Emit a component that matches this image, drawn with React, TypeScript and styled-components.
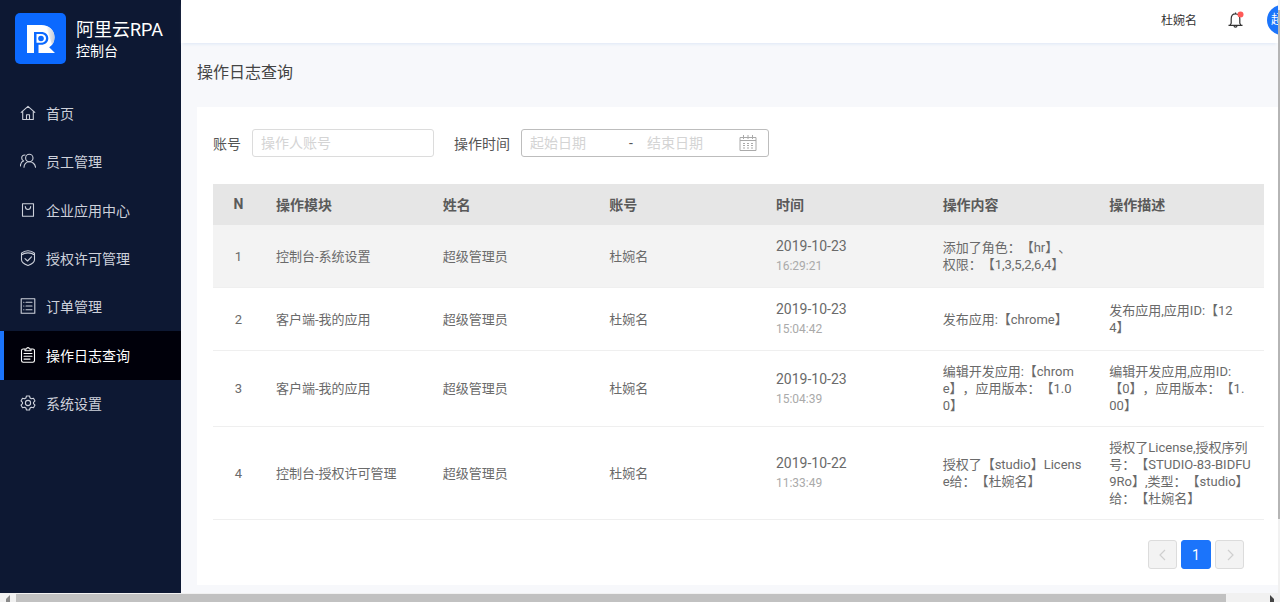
import React from 'react';
import styled, { createGlobalStyle } from 'styled-components';

const GlobalStyle = createGlobalStyle`
  *, *::before, *::after { box-sizing: border-box; }
  body {
    margin: 0;
    font-family: Roboto, 'Noto Sans CJK SC', sans-serif;
    font-size: 14px;
    color: #555;
    background: #f7f8fb;
    text-spacing-trim: space-all;
  }
  button, input { font: inherit; }
`;

const Page = styled.div`
  min-height: 100vh;
  display: flex;
  flex-direction: column;
`;

const Columns = styled.div`
  flex: 1;
  display: flex;
`;

const Sidebar = styled.aside`
  flex: 0 0 181px;
  background: #0d1833;
`;

const Brand = styled.div`
  display: flex;
  align-items: center;
  gap: 10px;
  padding: 13px 0 0 15px;
  color: #fff;
`;

const BrandText = styled.div`
  display: flex;
  flex-direction: column;
  padding-top: 2px;
`;

const BrandName = styled.span`
  font-size: 18px;
  line-height: 22px;
`;

const BrandSub = styled.span`
  line-height: 20px;
`;

const Nav = styled.nav`
  display: flex;
  flex-direction: column;
  height: 364px;
  padding-top: 25px;
`;

const NavItem = styled.a<{ $active?: boolean }>`
  flex: 1;
  display: flex;
  align-items: center;
  gap: 10px;
  padding: 0 0 1px 16px;
  border-left: 4px solid ${(p) => (p.$active ? '#1b74fb' : 'transparent')};
  background: ${(p) => (p.$active ? '#00000a' : 'transparent')};
  color: ${(p) => (p.$active ? '#fff' : '#cdd1db')};
  text-decoration: none;
`;

const NavIcon = styled.svg`
  width: 16px;
  height: 16px;
  fill: none;
  stroke: currentColor;
  stroke-width: 1.1;
  stroke-linecap: round;
  stroke-linejoin: round;
`;

const Main = styled.main`
  flex: 1;
  min-width: 0;
`;

const TopBar = styled.header`
  display: flex;
  align-items: center;
  justify-content: flex-end;
  height: 43px;
  padding-bottom: 4px;
  background: #fff;
  box-shadow: 0 3px 3px -2px #dde7f6;
`;

const UserName = styled.span`
  font-size: 12px;
  margin-right: 30px;
  color: #333;
`;

const BellButton = styled.button`
  display: flex;
  padding: 0;
  margin-right: 22px;
  border: 0;
  background: none;
  color: #333;
`;

const AvatarClip = styled.div`
  width: 11px;
  overflow: hidden;
`;

const Avatar = styled.div`
  width: 30px;
  height: 30px;
  padding-left: 4px;
  border-radius: 50%;
  background: #1b74fb;
  color: #fff;
  font-size: 12px;
  line-height: 30px;
  white-space: nowrap;
`;

const Title = styled.h1`
  margin: 0;
  padding: 18px 16px 22px;
  font-size: 16px;
  line-height: 24px;
  font-weight: 400;
  color: #444;
`;

const Card = styled.section`
  margin: 0 0 8px 16px;
  padding: 22px 14px 16px 16px;
  background: #fff;
`;

const Filters = styled.form`
  display: flex;
  align-items: center;
  gap: 20px;
  margin-bottom: 27px;
`;

const Field = styled.div`
  display: flex;
  align-items: center;
  gap: 11px;
`;

const PlainInput = styled.input`
  min-width: 0;
  padding: 0;
  border: 0;
  outline: 0;
  background: none;
  color: #555;
  &::placeholder { color: #d4d4d4; opacity: 1; }
`;

const BoxedInput = styled(PlainInput)`
  width: 182px;
  height: 28px;
  padding: 0 8px;
  border: 1px solid #dcdcdc;
  border-radius: 3px;
`;

const RangeBox = styled.div`
  display: flex;
  align-items: center;
  width: 248px;
  height: 28px;
  padding: 0 11px 0 8px;
  border: 1px solid #bdbdbd;
  border-radius: 3px;
`;

const StartInput = styled(PlainInput)`
  width: 99px;
`;

const EndInput = styled(PlainInput)`
  flex: 1;
`;

const Dash = styled.span`
  width: 18px;
`;

const Table = styled.table`
  width: 100%;
  table-layout: fixed;
  border-collapse: collapse;
`;

const HeadCell = styled.th<{ $narrow?: boolean }>`
  width: ${(p) => (p.$narrow ? '51px' : 'auto')};
  height: 41px;
  padding: 0 ${(p) => (p.$narrow ? '0' : '12px')} 2px;
  background: #e6e6e6;
  text-align: ${(p) => (p.$narrow ? 'center' : 'left')};
  font-weight: 700;
  color: #5a5a5a;
`;

const Row = styled.tr<{ $hover?: boolean }>`
  background: ${(p) => (p.$hover ? '#f3f3f3' : 'transparent')};
  border-bottom: 1px solid #efefef;
`;

const Cell = styled.td<{ $center?: boolean }>`
  padding: 12px ${(p) => (p.$center ? '0' : '12px')};
  text-align: ${(p) => (p.$center ? 'center' : 'left')};
  font-size: 13px;
  line-height: 17px;
  color: #6a6a6a;
  white-space: pre;
`;

const DateCell = styled(Cell)`
  padding: 11px 12px;
`;

const DateText = styled.div`
  font-size: 14px;
  line-height: 20px;
`;

const TimeText = styled.div`
  font-size: 12px;
  line-height: 20px;
  color: #aaa;
`;

const Pager = styled.nav`
  display: flex;
  justify-content: flex-end;
  gap: 4px;
  padding: 20px 20px 0 0;
`;

const PageButton = styled.button<{ $current?: boolean }>`
  display: flex;
  align-items: center;
  justify-content: center;
  width: ${(p) => (p.$current ? '30px' : '29px')};
  height: 29px;
  padding: 0;
  border: 1px solid ${(p) => (p.$current ? '#1b74fb' : '#dcdcdc')};
  border-radius: 3px;
  background: ${(p) => (p.$current ? '#1b74fb' : '#f3f3f3')};
  color: ${(p) => (p.$current ? '#fff' : '#cfcfcf')};
`;

const SideTrack = styled.div`
  flex: 0 0 2px;
  padding: 10px 0 74px;
  background: #f1f1f1;
`;

const SideThumb = styled.div`
  height: 100%;
  background: #b5b5b5;
`;

const BottomTrack = styled.div`
  display: flex;
  align-items: flex-end;
  justify-content: space-between;
  gap: 2px;
  height: 9px;
  padding: 1px 5px 0;
  background: #f1f1f1;
`;

const BottomThumb = styled.div`
  flex: 1;
  height: 8px;
  margin: 0 42px 0 4px;
  background: #c1c1c1;
`;

const navItems = [
  {
    label: '首页',
    icon: <path d="M1.2 7.3 8 1.4l6.800 5.900M2.700 6.300v8.200h10.600V6.300M6.500 14.300V9.800h3v4.500" />,
  },
  {
    label: '员工管理',
    icon: (
      <>
        <circle cx="9.300" cy="5" r="3.700" />
        <path d="M4 14.300c0-3.300 2.200-5.600 5.300-5.600s5.900 2.300 6.200 5.600M5 2C2.500 2 1.700 3.600 1.700 5c0 1.400.8 2.500 2 2.900C1.600 8.500.5 10.500.4 13" />
      </>
    ),
  },
  {
    label: '企业应用中心',
    icon: <path d="M2.500 1.800h11v12.400h-11zM5.300 4.500c.1 1.900 1.100 3 2.700 3s2.600-1.100 2.700-3" />,
  },
  {
    label: '授权许可管理',
    icon: <path d="M1.500 3.200C3.700 1.300 5.700.7 8 .7s4.300.6 6.500 2.500v6.600c0 2.500-2.800 4.400-6.500 5.600-3.700-1.200-6.500-3.100-6.500-5.600zM1.500 5c2-1.600 4.200-2.100 6.500-2.100s4.500.5 6.500 2.100M5 8.600l2.500 2.400 4-4.200" />,
  },
  {
    label: '订单管理',
    icon: <path d="M1.200.7h13.600v14.600H1.200zM6 4.200h6M6 8h6M6 11.800h6M3.700 4.200h.2M3.700 8h.2M3.700 11.800h.2" />,
  },
  {
    label: '操作日志查询',
    active: true,
    icon: <path d="M5 2H3.200c-1 0-1.700.7-1.700 1.700v9.900c0 1 .7 1.700 1.700 1.700h9.600c1 0 1.700-.7 1.700-1.700V3.700c0-1-.7-1.700-1.700-1.700H11M5 3.800V2h1.500C6.700 1 7.200.6 8 .6s1.300.4 1.500 1.400H11v1.800zM4 6.500h8M4 9.300h8M4 12.100h6" />,
  },
  {
    label: '系统设置',
    icon: (
      <>
        <path d="M6.500 1h3l.6 2 1.300.8 2.100-.5L15 5.900l-1.500 1.500v1.200L15 10.100l-1.500 2.600-2.100-.5-1.300.8-.6 2h-3l-.6-2-1.300-.8-2.100.5L1 10.100l1.500-1.500V7.400L1 5.900l1.500-2.600 2.100.5L5.900 3z" />
        <circle cx="8" cy="8" r="2.600" />
      </>
    ),
  },
];

const headers = ['操作模块', '姓名', '账号', '时间', '操作内容', '操作描述'];

const logs = [
  {
    module: '控制台-系统设置',
    date: '2019-10-23',
    time: '16:29:21',
    content: '添加了角色：【hr】、\n权限：【1,3,5,2,6,4】',
    note: '',
  },
  {
    module: '客户端-我的应用',
    date: '2019-10-23',
    time: '15:04:42',
    content: '发布应用:【chrome】',
    note: '发布应用,应用ID:【12\n4】',
  },
  {
    module: '客户端-我的应用',
    date: '2019-10-23',
    time: '15:04:39',
    content: '编辑开发应用:【chrom\ne】，应用版本：【1.0\n0】',
    note: '编辑开发应用,应用ID:\n【0】，应用版本：【1.\n00】',
  },
  {
    module: '控制台-授权许可管理',
    date: '2019-10-22',
    time: '11:33:49',
    content: '授权了【studio】Licens\ne给：【杜婉名】',
    note: '授权了License,授权序列\n号：【STUDIO-83-BIDFU\n9Ro】,类型：【studio】\n给：【杜婉名】',
  },
];

const Logo = () => (
  <svg width="51" height="51" viewBox="0 0 51 51" aria-hidden="true">
    <defs>
      <linearGradient id="fold" x1="0" y1="0" x2="1" y2="0">
        <stop offset="0" stopColor="#fff" />
        <stop offset="1" stopColor="#c4cbd8" />
      </linearGradient>
    </defs>
    <rect width="51" height="51" rx="5" fill="#0b69ff" />
    <path d="M12 12h14.500c7.500 0 13 5 13 12.200 0 4.600-2 8-5.300 10L40 40H12z" fill="#fff" />
    <path d="M31 13c5 1.700 8.500 5.800 8.500 11.200 0 3-1 5.500-2.500 7.500z" fill="url(#fold)" />
    <path d="M19 19h7c4.500 0 7.300 2.500 7.300 6.300 0 4-2.800 6.500-7.300 6.500h-2.500V40H19z" fill="#0b69ff" />
    <path d="M21.500 21h4.500c3 0 5 1.600 5 4.300 0 2.800-2 4.500-5 4.500h-4.500z" fill="#fff" />
    <circle cx="26" cy="25.500" r="2.800" fill="#0b69ff" />
  </svg>
);

const Bell = () => (
  <svg width="18" height="18" viewBox="0 0 18 18" fill="none" stroke="currentColor" strokeWidth="1.200" strokeLinejoin="round" aria-hidden="true">
    <path d="M1.500 14.300h14M3 14.200l1.200-2V7.800c0-3 1.700-5 4.300-5s4.300 2 4.300 5v4.400l1.200 2M8.500 2.800V1.500M7 14.500c0 2.300 3 2.300 3 0" />
    <circle cx="13.500" cy="3.500" r="3" fill="#ff5a57" stroke="none" />
  </svg>
);

const Calendar = () => (
  <svg width="18" height="18" viewBox="0 0 18 18" fill="none" stroke="#aaa" strokeWidth="1" aria-hidden="true">
    <path d="M1 3.500h16v13H1zM1 6.500h16M4.500 1v4M9 1v4M13.500 1v4" />
    <path d="M4 9.500h2M8 9.500h2M12 9.500h2M4 11.500h2M8 11.500h2M12 11.500h2M4 14h2M8 14h2M12 14h2" />
  </svg>
);

const Chevron = ({ d }: { d: string }) => (
  <svg width="14" height="14" viewBox="0 0 14 14" fill="none" stroke="currentColor" strokeWidth="1.200" aria-hidden="true">
    <path d={d} />
  </svg>
);

export default function App() {
  return (
    <Page>
      <GlobalStyle />
      <Columns>
        <Sidebar>
          <Brand>
            <Logo />
            <BrandText>
              <BrandName>阿里云RPA</BrandName>
              <BrandSub>控制台</BrandSub>
            </BrandText>
          </Brand>
          <Nav>
            {navItems.map((item) => (
              <NavItem key={item.label} href="#" $active={item.active}>
                <NavIcon viewBox="0 0 16 16">{item.icon}</NavIcon>
                {item.label}
              </NavItem>
            ))}
          </Nav>
        </Sidebar>
        <Main>
          <TopBar>
            <UserName>杜婉名</UserName>
            <BellButton type="button" aria-label="通知">
              <Bell />
            </BellButton>
            <AvatarClip>
              <Avatar>超</Avatar>
            </AvatarClip>
          </TopBar>
          <Title>操作日志查询</Title>
          <Card>
            <Filters>
              <Field>
                <label htmlFor="account">账号</label>
                <BoxedInput id="account" placeholder="操作人账号" />
              </Field>
              <Field>
                <label htmlFor="start">操作时间</label>
                <RangeBox>
                  <StartInput id="start" placeholder="起始日期" />
                  <Dash>-</Dash>
                  <EndInput aria-label="结束日期" placeholder="结束日期" />
                  <Calendar />
                </RangeBox>
              </Field>
            </Filters>
            <Table>
              <thead>
                <tr>
                  <HeadCell $narrow>N</HeadCell>
                  {headers.map((h) => (
                    <HeadCell key={h}>{h}</HeadCell>
                  ))}
                </tr>
              </thead>
              <tbody>
                {logs.map((log, i) => (
                  <Row key={log.time} $hover={i === 0}>
                    <Cell $center>{i + 1}</Cell>
                    <Cell>{log.module}</Cell>
                    <Cell>超级管理员</Cell>
                    <Cell>杜婉名</Cell>
                    <DateCell>
                      <DateText>{log.date}</DateText>
                      <TimeText>{log.time}</TimeText>
                    </DateCell>
                    <Cell>{log.content}</Cell>
                    <Cell>{log.note}</Cell>
                  </Row>
                ))}
              </tbody>
            </Table>
            <Pager aria-label="分页">
              <PageButton type="button" aria-label="上一页" disabled>
                <Chevron d="M9 2 4 7l5 5" />
              </PageButton>
              <PageButton type="button" $current>1</PageButton>
              <PageButton type="button" aria-label="下一页" disabled>
                <Chevron d="m5 2 5 5-5 5" />
              </PageButton>
            </Pager>
          </Card>
        </Main>
        <SideTrack>
          <SideThumb />
        </SideTrack>
      </Columns>
      <BottomTrack>
        <svg width="5" height="7" viewBox="0 0 5 7" aria-hidden="true">
          <path d="M5 0v7H1V4z" fill="#8a8a8a" />
        </svg>
        <BottomThumb />
        <svg width="5" height="7" viewBox="0 0 5 7" aria-hidden="true">
          <path d="M0 0v7h4V4z" fill="#444" />
        </svg>
      </BottomTrack>
    </Page>
  );
}
